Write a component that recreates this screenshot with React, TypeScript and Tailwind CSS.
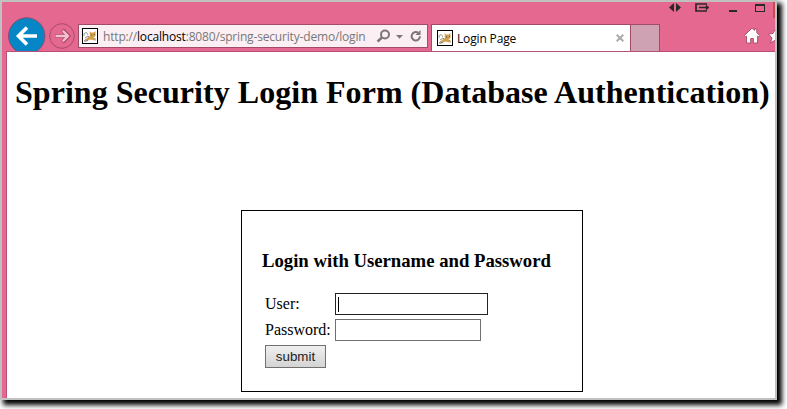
import type { ReactNode } from "react";

function CatIcon() {
  return (
    <svg width="16" height="16" viewBox="0 0 16 16" className="block shrink-0">
      <rect x=".5" y=".5" width="15" height="15" fill="#fff" stroke="#000" />
      <path d="M2 8 L2 5.5 L4.5 4.5 L6 7 M2 13 L4 11" fill="none" stroke="#9b9b9b" />
      <path d="M7.5 3 L9 4.5 L11.5 4.5 L13.5 3 L13.5 8 L11.5 9.5 L14 13 L11 12 L8 11.5 L5 13 L3 13 L5 10 L8 8 Z" fill="#d2a04c" />
      <path d="M3 10 L6 8 L7 9 M2.5 13.5 L6 12.5 M12 10 L14 11.5" fill="none" stroke="#777066" strokeWidth=".8" />
      <path d="M9 7h1M12 6.5h1" stroke="#6e5425" />
    </svg>
  );
}

function WindowControls() {
  return (
    <svg width="108" height="18" viewBox="667 2 108 18" className="block" fill="none">
      <path d="M674 3v9l-5-4.5zM676 3v9l5-4.5z" fill="#292929" />
      <path d="M707 4h-11v7h11M699 7.5h9M706 5.5l2 2-2 2" stroke="#292929" strokeWidth="1.7" />
      <path d="M729 10h8v2h-8z" fill="#292929" />
      <path d="M755 4h10v8h-10z M756 6v5h8V6z" fill="#292929" fillRule="evenodd" />
      <path d="M773 2h2v16h-2z" fill="#c84b50" />
    </svg>
  );
}

function ToolbarIcons() {
  return (
    <svg width="32" height="20" viewBox="743 26 32 20" className="block" fill="#fff" stroke="#a34a68" strokeWidth=".9">
      <path d="M752 28l2.5 2.4V29h2.3v3.6l3 3.1-1.2 1.2-1-.8V43h-4.2v-4.5h-2.7V43h-4.2v-6.9l-1 .8-1.2-1.2z" />
      <path d="M775.5 28.5l2 5 5 .5-4 3 1 6-4-3-5 3 1.5-5-3.5-4 4.5-.5z" />
    </svg>
  );
}

function Row({ label, children }: { label: string; children: ReactNode }) {
  return (
    <label className="flex h-[22px] items-center">
      <span className="w-[70px] text-[16px] leading-[22px]">{label}</span>
      {children}
    </label>
  );
}

export default function App() {
  return (
    <div className="h-[409px] w-[787px] overflow-hidden bg-white">
      <div className="flex h-[400px] w-[777px] flex-col border-2 border-[#c0c0c0] bg-[#e56891] shadow-[4px_4px_5px_1px_#000]">
        <header className="flex h-[49px] shrink-0 overflow-hidden">
          <svg width="76" height="49" viewBox="2 2 76 49" className="block shrink-0" fill="none">
            <circle cx="26.7" cy="36" r="18.2" fill="#0786c5" stroke="#8b4c72" />
            <path d="M37 36H19M27 27.5L18.5 36l8.5 8.5" stroke="#fff" strokeWidth="3.6" />
            <circle cx="62" cy="36" r="12.3" stroke="#a64b6b" />
            <path d="M55 36h13M62.5 30l6 6-6 6" stroke="#a64b6b" strokeWidth="4" />
            <path d="M55.5 36h12M62.8 30.7l5.2 5.3-5.2 5.3" stroke="#f8bfd1" strokeWidth="2.3" />
          </svg>
          <div className="mt-[22px] flex h-6 w-[350px] shrink-0 items-center border border-[#a24b67] bg-[#fceff3] pl-[3px]">
            <CatIcon />
            <div className="ml-[5px] mt-[2px] w-[270px] shrink-0 whitespace-nowrap font-['Open_Sans',sans-serif] text-[12px] leading-[20px] tracking-[-0.175px] text-[#777]">
              http://<span className="text-black">localhost</span>:8080/spring-security-demo/login
            </div>
            <svg width="50" height="18" viewBox="373 27 50 18" className="block shrink-0" fill="none" stroke="#7b7679">
              <circle cx="385" cy="34.5" r="4" strokeWidth="2" />
              <path d="M382 37.5l-4.5 4" strokeWidth="2.4" />
              <path d="M396 35h7l-3.5 3.7z" fill="#7b7679" stroke="none" />
              <path d="M418 32.7a4.2 4.2 0 1 0 2 3.6" strokeWidth="2" />
              <path d="M420.5 30v5h-5z" fill="#7b7679" stroke="none" />
            </svg>
          </div>
          <div className="ml-[3px] mt-[22px] flex h-[27px] w-[200px] shrink-0 items-center border-x border-t border-[#a24b67] bg-white pl-[5px]">
            <CatIcon />
            <span className="ml-1 mt-[2px] w-[159px] shrink-0 whitespace-nowrap font-['Open_Sans',sans-serif] text-[12px] leading-[18px] tracking-[-0.15px] text-black">Login Page</span>
            <svg width="8" height="8" viewBox="0 0 8 8" stroke="#aaa" strokeWidth="2" className="shrink-0"><path d="M.7.7l6.6 6.6M7.3.7L.7 7.3" /></svg>
          </div>
          <div className="mt-[22px] h-[27px] w-[29px] shrink-0 border-r border-t border-[#a24b67] bg-[#cfa2b3]" />
          <div className="flex flex-1 flex-col items-end">
            <WindowControls />
            <div className="mt-[6px]"><ToolbarIcons /></div>
          </div>
        </header>
        <main className="ml-1 flex flex-1 flex-col border-l border-t border-[#b95075] bg-white pl-2 font-['Liberation_Serif',serif] text-black">
          <h1 className="mt-[22px] h-[37px] whitespace-nowrap text-[32px] font-bold leading-[37px] tracking-[0.035px]">Spring Security Login Form (Database Authentication)</h1>
          <form className="ml-[226px] mt-[99px] h-[182px] w-[342px] border border-black px-5 pt-[39px]" onSubmit={(e) => e.preventDefault()}>
            <h3 className="h-[22px] whitespace-nowrap text-[18.72px] font-bold leading-[22px]">Login with Username and Password</h3>
            <div className="ml-[3px] mt-[21px] flex flex-col gap-1">
              <Row label="User:">
                <span className="flex h-[22px] w-[153px] items-center border border-[#222] pl-[2px]"><span className="h-[15px] w-px bg-black" /></span>
              </Row>
              <Row label="Password:">
                <input type="password" className="h-[22px] w-[146px] border border-[#707070] px-1 outline-none" />
              </Row>
              <button className="h-[23px] w-[61px] border border-[#707070] bg-linear-to-b from-[#efefef] to-[#d4d4d4] font-['Liberation_Sans',sans-serif] text-[13.33px] leading-[20px] text-[#222]">submit</button>
            </div>
          </form>
        </main>
      </div>
    </div>
  );
}
